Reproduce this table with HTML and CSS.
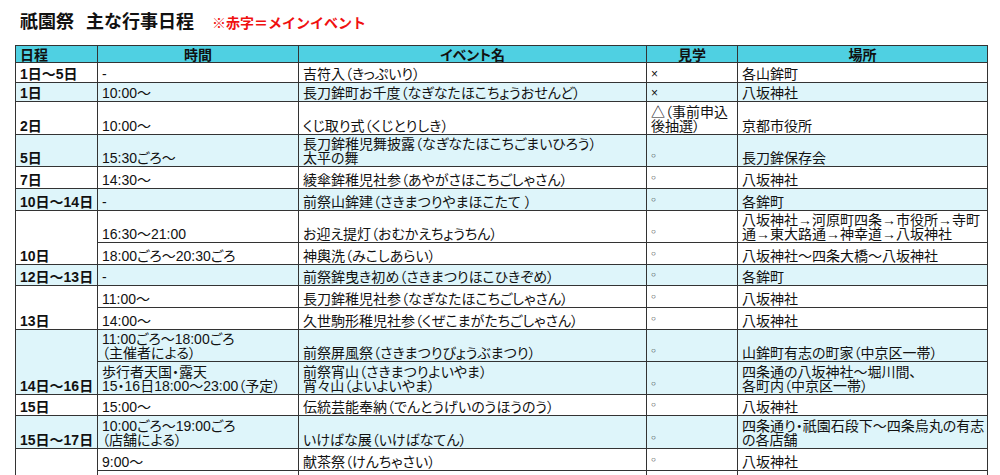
FILE: index.html
```html
<!DOCTYPE html>
<html lang="ja">
<head>
<meta charset="utf-8">
<title>祇園祭 主な行事日程</title>
<link rel="stylesheet" href="styles.css">
</head>
<body>
<div class="title">
  <h1 class="title-main">祇園祭<span class="title-gap"></span>主な行事日程</h1>
  <span class="title-note">※赤字＝メインイベント</span>
</div>
<table class="schedule">
  <colgroup>
    <col class="c-date"><col class="c-time"><col class="c-event"><col class="c-view"><col class="c-place">
  </colgroup>
  <thead>
    <tr>
      <th class="left">日程</th><th>時間</th><th>イベント名</th><th>見学</th><th>場所</th>
    </tr>
  </thead>
  <tbody>
    <tr>
      <td class="date">1日～5日</td><td>-</td><td>吉符入（きっぷいり）</td><td><span class="x">×</span></td><td>各山鉾町</td>
    </tr>
    <tr class="alt">
      <td class="date">1日</td><td>10:00～</td><td>長刀鉾町お千度（なぎなたほこちょうおせんど）</td><td><span class="x">×</span></td><td>八坂神社</td>
    </tr>
    <tr>
      <td class="date">2日</td><td>10:00～</td><td>くじ取り式（くじとりしき）</td><td>△（事前申込<br>後抽選）</td><td>京都市役所</td>
    </tr>
    <tr class="alt">
      <td class="date">5日</td><td>15:30ごろ～</td><td>長刀鉾稚児舞披露（なぎなたほこちごまいひろう）<br>太平の舞</td><td><span class="o">○</span></td><td>長刀鉾保存会</td>
    </tr>
    <tr>
      <td class="date">7日</td><td>14:30～</td><td>綾傘鉾稚児社参（あやがさほこちごしゃさん）</td><td><span class="o">○</span></td><td>八坂神社</td>
    </tr>
    <tr class="alt">
      <td class="date">10日～14日</td><td>-</td><td>前祭山鉾建（さきまつりやまほこたて&nbsp;）</td><td><span class="o">○</span></td><td>各鉾町</td>
    </tr>
    <tr>
      <td class="date" rowspan="2">10日</td><td>16:30～21:00</td><td>お迎え提灯（おむかえちょうちん）</td><td><span class="o">○</span></td><td>八坂神社→河原町四条→市役所→寺町<br>通→東大路通→神幸道→八坂神社</td>
    </tr>
    <tr>
      <td>18:00ごろ～20:30ごろ</td><td>神輿洗（みこしあらい）</td><td><span class="o">○</span></td><td>八坂神社～四条大橋～八坂神社</td>
    </tr>
    <tr class="alt">
      <td class="date">12日～13日</td><td>-</td><td>前祭鉾曳き初め（さきまつりほこひきぞめ）</td><td><span class="o">○</span></td><td>各鉾町</td>
    </tr>
    <tr>
      <td class="date" rowspan="2">13日</td><td>11:00～</td><td>長刀鉾稚児社参（なぎなたほこちごしゃさん）</td><td><span class="o">○</span></td><td>八坂神社</td>
    </tr>
    <tr>
      <td>14:00～</td><td>久世駒形稚児社参（くぜこまがたちごしゃさん）</td><td><span class="o">○</span></td><td>八坂神社</td>
    </tr>
    <tr class="alt">
      <td class="date" rowspan="2">14日～16日</td><td>11:00ごろ～18:00ごろ<br>（主催者による）</td><td>前祭屏風祭（さきまつりびょうぶまつり）</td><td><span class="o">○</span></td><td>山鉾町有志の町家（中京区一帯）</td>
    </tr>
    <tr class="alt">
      <td>歩行者天国・露天<br>15・16日18:00～23:00（予定）</td><td>前祭宵山（さきまつりよいやま）<br>宵々山（よいよいやま）</td><td><span class="o">○</span></td><td>四条通の八坂神社～堀川間、<br>各町内（中京区一帯）</td>
    </tr>
    <tr>
      <td class="date">15日</td><td>15:00～</td><td>伝統芸能奉納（でんとうげいのうほうのう）</td><td><span class="o">○</span></td><td>八坂神社</td>
    </tr>
    <tr class="alt">
      <td class="date">15日～17日</td><td>10:00ごろ～19:00ごろ<br>（店舗による）</td><td>いけばな展（いけばなてん）</td><td><span class="o">○</span></td><td>四条通り・祇園石段下～四条烏丸の有志<br>の各店舗</td>
    </tr>
    <tr>
      <td class="date" rowspan="2"></td><td>9:00～</td><td>献茶祭（けんちゃさい）</td><td><span class="o">○</span></td><td>八坂神社</td>
    </tr>
    <tr class="blank">
      <td></td><td></td><td></td><td></td>
    </tr>
  </tbody>
</table>
</body>
</html>
```

FILE: styles.css
```css
html, body {
  margin: 0;
  padding: 0;
  background: #ffffff;
}

body {
  font-family: "Liberation Sans", "Noto Sans CJK JP", sans-serif;
  color: #111111;
  font-feature-settings: "palt";
  padding-left: 15px;
}

.title {
  height: 45px;
  box-sizing: border-box;
  padding: 9px 0 0 5px;
  display: flex;
  align-items: baseline;
  gap: 18px;
  font-feature-settings: normal;
}

.title-main {
  margin: 0;
  font-size: 18px;
  line-height: 26px;
  font-weight: 700;
  color: #111111;
}

.title-gap {
  display: inline-block;
  width: 12px;
}

.title-note {
  font-size: 14px;
  font-weight: 700;
  color: #f01010;
}

.schedule {
  border-collapse: collapse;
  table-layout: fixed;
  width: 972px;
  font-size: 14px;
}

.c-date { width: 82px; }
.c-time { width: 201px; }
.c-event { width: 348px; }
.c-view { width: 91px; }
.c-place { width: 250px; }

.schedule th,
.schedule td {
  border: 1px solid #333333;
  padding: 2.6px 4px 1px 4px;
  line-height: 14px;
  vertical-align: bottom;
  text-align: left;
  white-space: nowrap;
  overflow: hidden;
}

.schedule th {
  background: #4fd0e2;
  font-weight: 700;
  text-align: center;
  padding: 2px 4px 0 4px;
}

.schedule th.left {
  text-align: left;
}

.schedule td.date {
  font-weight: 700;
}

.schedule tr.alt td {
  background: #def5fa;
}

.schedule tr.blank td {
  height: 20px;
}

.o {
  font-size: 8px;
  font-weight: 700;
  color: #222222;
  position: relative;
  top: -2px;
}

.x {
  font-size: 12px;
}
```
